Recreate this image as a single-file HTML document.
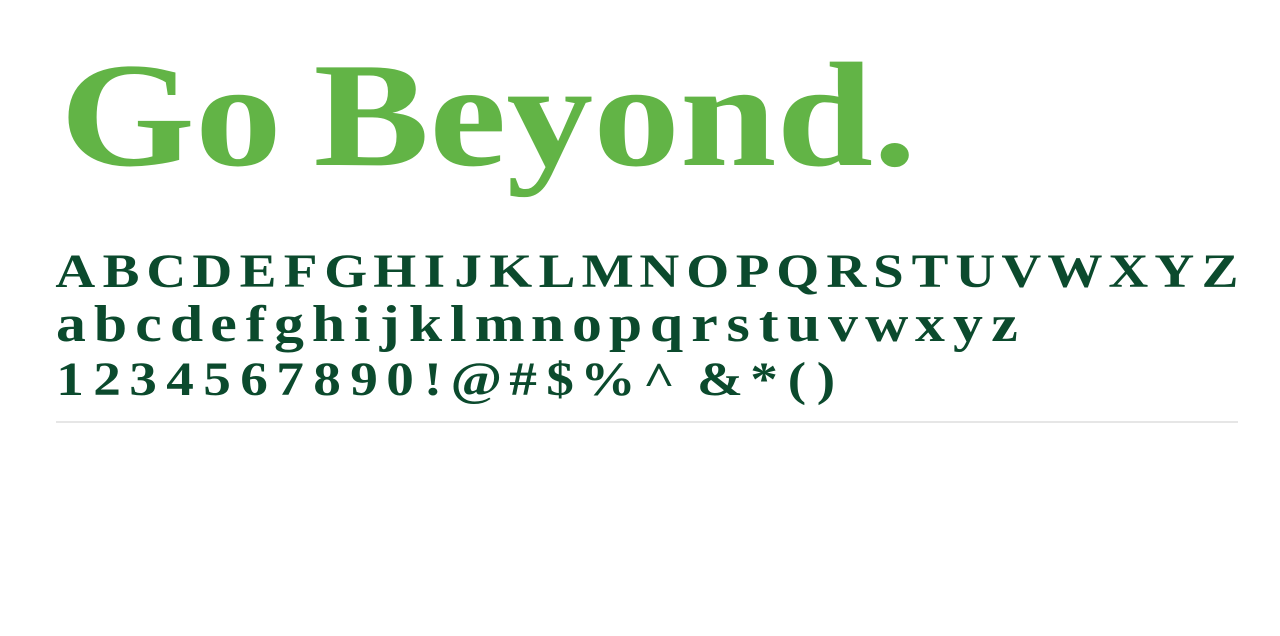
<!DOCTYPE html>
<html><head><meta charset="utf-8"><style>
html,body{margin:0;padding:0;background:#fff;width:1280px;height:636px;overflow:hidden;position:relative;font-family:"Liberation Serif",serif;font-weight:bold}
.h{position:absolute;left:60px;top:41px;font-size:149px;line-height:1;color:#62b446;letter-spacing:0px;word-spacing:-10px;white-space:nowrap;transform:scaleX(1.165);transform-origin:0 0}
.r{position:absolute;display:flex;justify-content:space-between;font-size:48px;line-height:1;color:#0b4a2d}
.r span{display:inline-block;transform:scaleX(1.15)}
.line{position:absolute;left:56px;top:421px;width:1182px;height:2px;background:#e6e6e6}
</style></head><body>
<div class="h">Go Beyond.</div>
<div class="r" style="left:58px;top:248px;width:1178px"><span>A</span><span>B</span><span>C</span><span>D</span><span>E</span><span>F</span><span>G</span><span>H</span><span>I</span><span>J</span><span>K</span><span>L</span><span>M</span><span>N</span><span>O</span><span>P</span><span>Q</span><span>R</span><span>S</span><span>T</span><span>U</span><span>V</span><span>W</span><span>X</span><span>Y</span><span>Z</span></div>
<div class="r" style="left:58px;width:958px;font-size:52px;top:299px"><span>a</span><span>b</span><span>c</span><span>d</span><span>e</span><span>f</span><span>g</span><span>h</span><span>i</span><span>j</span><span>k</span><span>l</span><span>m</span><span>n</span><span>o</span><span>p</span><span>q</span><span>r</span><span>s</span><span>t</span><span>u</span><span>v</span><span>w</span><span>x</span><span>y</span><span>z</span></div>
<div class="r" style="left:58px;top:356px;width:776px"><span>1</span><span>2</span><span>3</span><span>4</span><span>5</span><span>6</span><span>7</span><span>8</span><span>9</span><span>0</span><span>!</span><span>@</span><span>#</span><span>$</span><span>%</span><span>^</span><span style="margin-left:14px">&amp;</span><span>*</span><span>(</span><span>)</span></div>
<div class="line"></div>
</body></html>
